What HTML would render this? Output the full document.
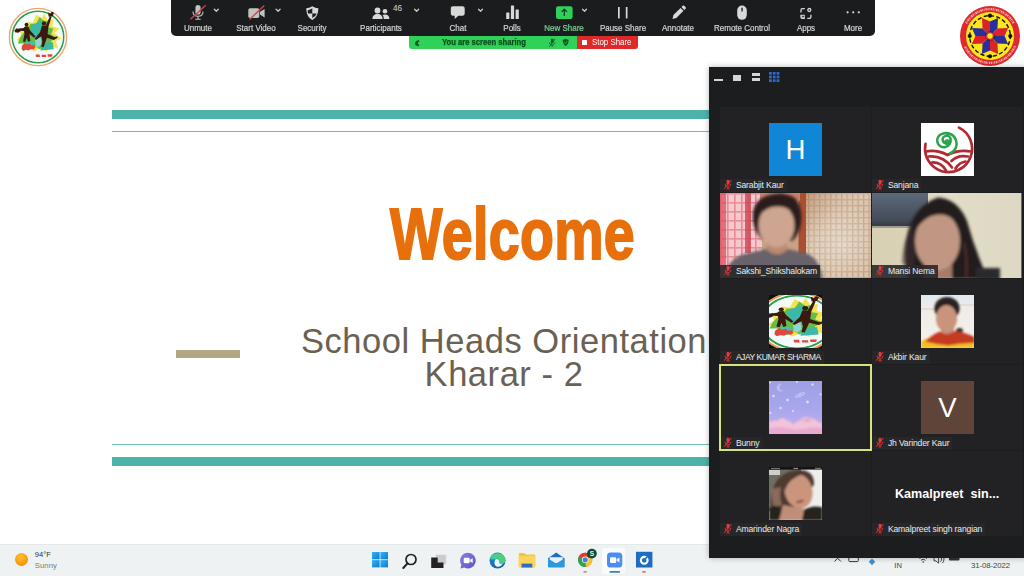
<!DOCTYPE html>
<html lang="en">
<head>
<meta charset="utf-8">
<title>Zoom Meeting - Screen Share</title>
<style>
*{box-sizing:border-box;margin:0;padding:0}
html,body{width:1024px;height:576px;overflow:hidden;background:#fff}
body{position:relative;font-family:"Liberation Sans","DejaVu Sans",sans-serif;color:#222}
.abs{position:absolute}
/* ---------- slide ---------- */
.teal{position:absolute;left:112px;width:700px;background:#4db3aa}
.welcome{position:absolute;left:389.500px;top:194px;font-weight:bold;font-size:71.800px;line-height:80px;color:#e8700c;-webkit-text-stroke:2px #e8700c;white-space:nowrap;transform-origin:0 0;transform:scaleX(.772);letter-spacing:.5px}
.sub{position:absolute;left:296px;top:324.5px;width:416px;text-align:center;font-size:34.5px;line-height:33px;color:#6a6153;white-space:nowrap;letter-spacing:.54px}
.tan{position:absolute;left:176px;top:349.5px;width:63.5px;height:8px;background:#b3a77f}
/* ---------- taskbar ---------- */
.taskbar{position:absolute;left:0;top:544px;width:1024px;height:32px;background:#eff2f2;border-top:1px solid #e6e9e9}
/* ---------- zoom toolbar ---------- */
.ztb{position:absolute;left:171px;top:0;width:704px;height:35.5px;background:#1b1c1e;border-radius:0 0 5px 5px}
.zl{position:absolute;top:21.800px;width:90px;margin-left:-45px;text-align:center;font-size:8.7px;line-height:12px;color:#d6d6d6;-webkit-text-stroke:.2px #d6d6d6;white-space:nowrap;transform:scaleX(.92)}
.zi{position:absolute;top:0}
.sharebar{position:absolute;left:409px;top:35.5px;width:168px;height:13px;background:#2fd158;border-radius:0 0 0 3px}
.stopbar{position:absolute;left:577px;top:35.5px;width:60.5px;height:13px;background:#e02828;border-radius:0 0 3px 0}
/* ---------- participants panel ---------- */
.panel{position:absolute;left:709px;top:67px;width:320px;height:491px;background:#1c1d1f;box-shadow:0 0 6px rgba(0,0,0,.28)}
.tile{position:absolute;width:150.200px;height:85.200px;background:#222224;overflow:hidden}
.c1{left:11.400px}.c2{left:163.400px;width:149.400px}
.r1{top:39.600px}.r2{top:125.600px}.r3{top:211.600px}.r4{top:297.600px}.r5{top:383.600px}
.av{position:absolute;left:48.500px;top:16.200px;width:53.200px;height:53.200px;overflow:hidden}
.c2 .av{left:48.400px}
.nm{position:absolute;left:0;bottom:0;height:13px;padding:0 3px 0 15.5px;font-size:8.6px;line-height:13.700px;color:#ececec;background:rgba(40,40,42,.9);white-space:nowrap;letter-spacing:-.15px}
.nm svg{position:absolute;left:3px;top:.7px}
</style>
</head>
<body>

<!-- ================= SLIDE ================= -->
<div class="teal" style="top:110px;height:8.5px"></div>
<div class="teal" style="top:131px;height:1px;background:#6dbfb7"></div>
<div class="teal" style="top:444px;height:1px;background:#6dbfb7"></div>
<div class="teal" style="top:457px;height:8.5px"></div>

<svg class="abs" style="left:8px;top:7.200px" width="60" height="60" viewBox="-30 -30 60 60">
<circle r="28.600" fill="#fff" stroke="#eaa56b" stroke-width="1.400"/>
<circle r="25.600" fill="none" stroke="#2f9c4b" stroke-width="1.800"/>
<circle r="24.900" fill="#f3fbfa"/>
<g transform="translate(.5 -.5) scale(1.150)"><path d="M-16-4l4-3 2-6 5 1 3-7 5 3 2-4 3 6 5-1-1 6 6 2-4 4 6 5-5 2 2 6-7-1-3 4-5-3-6 3-3-4-7 2 1-6-6-2 4-4z" fill="#f3e44f"/>
<path d="M-14-2l4-4 3-5 5 0 3-6 4 4 3-1 0 6 5 1-2 5 5 3-5 3 0 5-6-1-4 3-4-3-6 2-3-4-6 0 2-5z" fill="#62bd4b"/></g>
<path d="M-6-12.200L6-17 2.400-3.600-2.400 1.200-7.300-7.300z" fill="#3cb8a6"/>
<path d="M3.600 7.300L14.600 4.900 15.800 12.200 2.400 13.400z" fill="#3cb8a6"/>
<path d="M-12.200 4.900L-3.600 4.900-6 12.200-15.800 13.400z" fill="#43bfae"/>
<path d="M-3 2l2.500-3 3 1.500 1 6-3 4-3-2z" fill="#8fd8d0"/>
<g fill="#e4473a">
  <path d="M-16 8.500l3-2.500 2 1.500 3-1 1.500 2 3-.5 1 2.500-2 2-3-.5-2 1.500-3-1-2 1.500-2-2z"/>
  <path d="M-2.500 17.500h4l.5 2.500h-4zM3.500 17.800h4.500l.3 2.300h-4.500zM9.500 17.200h5l-.5 2.500h-4.200z"/>
</g>
<g fill="#3a1a10">
  <circle cx="-11.500" cy="-12.400" r="1.900"/>
  <path d="M-13-10.500l3.200-.3 1.800 4 5.500 6.300-1.500 1.300-4.500-3.800 .8 7-2.300.8-1.200-4-1.500 4.300-2.300-.6 1.500-7.500-.5-3-7.500-.300-.2-1.700 7.200-1z"/>
  <path d="M-23.500-6.800l2.300-2 1.700 1 1.800-1 .6 2.800-2.600 1.800-3.300-.5z"/>
  <circle cx="6" cy="-13.600" r="2.100"/>
  <path d="M4-11.500l3.800.2 4.200-9.700 1.600.8-3.200 10.200-.8 7 6.800 3.200 2.800-1 .5 1.500-3.800 2.300-7-2.300-1.500 4.500-1.800 5-2.300-.5 1-5.500-1-5-5.300 3.800-1.300-1.300 5.300-6.500z"/>
  <path d="M10-24.500l2.300 1 1.500-1.800 2.200.8-1.300 3.800-4 .5z"/>
</g>
</svg>
<svg class="abs" style="left:960.400px;top:6.400px" width="60" height="60" viewBox="-30 -30 60 60">
<circle r="30" fill="#dd2a2e"/>
<path d="M-23.75 -12.63A26.9 26.9 0 0 1 23.75 -12.63M24.94 10.08A26.9 26.9 0 0 1 -24.94 10.08" fill="none" stroke="#fbe3dc" stroke-width="2.300" stroke-dasharray="1.100 .8 .6 .7 1.500 .6" opacity=".72"/>
<circle r="24" fill="#fde71c"/>
<circle r="20.300" fill="none" stroke="#111" stroke-width="1.400" stroke-dasharray="4.200 2.200" stroke-dashoffset="-5.400"/>
<path d="M0 0L-7.42 -7.42 -8.05 -18.09 0 -14.6z" fill="#d8232a"/><path d="M0 0L0 -14.6 8.05 -18.09 7.42 -7.42z" fill="#2a2f9b"/><path d="M0 0L7.42 -7.42 18.09 -8.05 14.6 0z" fill="#d8232a"/><path d="M0 0L14.6 0 18.09 8.05 7.42 7.42z" fill="#2a2f9b"/><path d="M0 0L7.42 7.42 8.05 18.09 0 14.6z" fill="#d8232a"/><path d="M0 0L0 14.6 -8.05 18.09 -7.42 7.42z" fill="#2a2f9b"/><path d="M0 0L-7.42 7.42 -18.09 8.05 -14.6 0z" fill="#d8232a"/><path d="M0 0L-14.6 0 -18.09 -8.05 -7.42 -7.42z" fill="#2a2f9b"/>
<circle cx="0" cy="-20.3" r="2.100" fill="#111"/><circle cx="20.3" cy="0" r="2.100" fill="#111"/><circle cx="0" cy="20.3" r="2.100" fill="#111"/><circle cx="-20.3" cy="0" r="2.100" fill="#111"/>
<circle r="3.300" fill="#fde71c" stroke="#d8232a" stroke-width=".9"/>
<circle r="4.600" fill="none" stroke="#111" stroke-width=".7" stroke-dasharray=".8 1"/>
</svg>
<div class="welcome">Welcome</div>
<div class="tan"></div>
<div class="sub">School Heads Orientation<br>Kharar - 2</div>

<!-- ================= TASKBAR ================= -->
<div class="taskbar" id="taskbar">
  <!-- weather -->
  <div class="abs" style="left:14.900px;top:7.500px;width:13.600px;height:13.600px;border-radius:50%;background:radial-gradient(circle at 45% 35%,#ffc53a 0%,#fb9b0c 55%,#ee7d05 100%)"></div>
  <div class="abs" id="wt1" style="left:34.800px;top:5.400px;font-size:7.600px;line-height:9px;color:#333;white-space:nowrap">94°F</div>
  <div class="abs" id="wt2" style="left:34.800px;top:15.900px;font-size:7.800px;line-height:9px;color:#7b7b7b;white-space:nowrap">Sunny</div>
  <!-- start -->
  <svg class="abs" style="left:372.200px;top:7.300px" width="16" height="15.400" viewBox="0 0 16 15.400">
    <defs><linearGradient id="wing" x1="0" y1="0" x2="1" y2="1"><stop offset="0" stop-color="#35b6f2"/><stop offset="1" stop-color="#0a78d4"/></linearGradient></defs>
    <g fill="url(#wing)"><rect x="0" y="0" width="7.600" height="7.300"/><rect x="8.400" y="0" width="7.600" height="7.300"/><rect x="0" y="8.100" width="7.600" height="7.300"/><rect x="8.400" y="8.100" width="7.600" height="7.300"/></g>
  </svg>
  <!-- search -->
  <svg class="abs" style="left:400px;top:5px" width="20" height="20" viewBox="400 549 20 20">
    <circle cx="411" cy="558.500" r="5" fill="none" stroke="#222" stroke-width="1.700"/>
    <path d="M407.500 562.400L403.300 567" stroke="#222" stroke-width="2" stroke-linecap="round"/>
  </svg>
  <!-- task view -->
  <svg class="abs" style="left:430px;top:8px" width="18" height="16" viewBox="430 552 18 16">
    <rect x="435.500" y="553.400" width="10.800" height="10.200" rx="1" fill="#c9cbcc" stroke="#eceeee" stroke-width=".8"/>
    <path d="M431.200 556.500h6.500v5h5.800v5.400h-12.300z" fill="#222"/>
  </svg>
  <!-- teams chat -->
  <svg class="abs" style="left:458px;top:6px" width="20" height="20" viewBox="458 550 20 20">
    <defs><linearGradient id="tch" x1="0" y1="0" x2="1" y2="1"><stop offset="0" stop-color="#8b7fe0"/><stop offset="1" stop-color="#5b55c4"/></linearGradient></defs>
    <path d="M468 551.800a7.800 7.800 0 1 1-3.700 14.700l-3.900 1 1-3.700A7.800 7.800 0 0 1 468 551.800z" fill="url(#tch)"/>
    <rect x="463.700" y="556.800" width="6" height="5.400" rx="1.100" fill="#fff"/>
    <path d="M470.200 558.800l2.500-1.500v4.600l-2.500-1.500z" fill="#fff"/>
  </svg>
  <!-- edge -->
  <svg class="abs" style="left:488px;top:6px" width="20" height="20" viewBox="488 550 20 20">
    <defs><linearGradient id="edg" x1="0" y1="0" x2="1" y2="1"><stop offset="0" stop-color="#1b8fd8"/><stop offset=".6" stop-color="#1669b8"/><stop offset="1" stop-color="#0f4f96"/></linearGradient>
    <linearGradient id="edg2" x1="0" y1="1" x2="1" y2="0"><stop offset="0" stop-color="#2cc3d2"/><stop offset="1" stop-color="#5fd34e"/></linearGradient></defs>
    <circle cx="497.500" cy="559.600" r="8" fill="url(#edg)"/>
    <path d="M490 557.500a8 8 0 0 1 15.400 1.200c.3 2.700-1.700 4.300-3.900 4.300-1.600 0-2.500-.7-2.300-1.600.5-1.100 0-3.300-2.300-3.400-3-.1-5.300 1.500-6.900-.500z" fill="url(#edg2)"/>
    <path d="M495.500 558.200c2.300-.8 4.200.7 3.700 2.900-.3 1.500 1.500 2.300 3.500 1.700-1 2-3 3.300-5.300 3-2.800-.5-4-4.600-1.900-7.600z" fill="#eef6fb"/>
  </svg>
  <!-- folder -->
  <svg class="abs" style="left:517px;top:6.200px" width="20" height="18" viewBox="517 551 20 18">
    <path d="M518.800 554.200c0-.7.500-1.200 1.200-1.200h4.200l1.600 1.600h8.300c.7 0 1.200.5 1.200 1.200v10.500c0 .7-.5 1.200-1.200 1.200h-14.100c-.7 0-1.200-.5-1.200-1.200z" fill="#f7c23c"/>
    <path d="M518.800 556h16.500v10.300c0 .7-.5 1.200-1.200 1.200h-14.100c-.7 0-1.200-.5-1.200-1.200z" fill="#fbd55a"/>
    <rect x="521.500" y="563.600" width="10.800" height="3.900" fill="#2c6fbf"/>
  </svg>
  <!-- mail -->
  <svg class="abs" style="left:547px;top:6.200px" width="20" height="18" viewBox="547 551 20 18">
    <path d="M548 558.200l8.200-5.600 8.200 5.600v8.100c0 .6-.4 1-1 1h-14.400c-.6 0-1-.4-1-1z" fill="#1c6fc0"/>
    <path d="M549.600 557.200h13.200v6h-13.200z" fill="#eaf3fb"/>
    <path d="M548 558.600l8.200 5 8.200-5v7.700c0 .6-.4 1-1 1h-14.400c-.6 0-1-.4-1-1z" fill="#2c97e3"/>
  </svg>
  <!-- chrome -->
  <svg class="abs" style="left:576px;top:2.400px" width="24" height="26" viewBox="576 547 24 26">
    <circle cx="585.200" cy="559.800" r="7.100" fill="#e13c30"/>
    <path d="M585.200 559.800L579 556.300A7.100 7.100 0 0 0 585.900 566.900z" fill="#2ea44f"/>
    <path d="M585.200 559.800L585.900 566.900A7.100 7.100 0 0 0 591.400 556.300z" fill="#f5c327"/>
    <path d="M585.200 559.800L579 556.300A7.100 7.100 0 0 1 591.400 556.300z" fill="#e13c30"/>
    <circle cx="585.200" cy="559.800" r="3.300" fill="#fff"/>
    <circle cx="585.200" cy="559.800" r="2.600" fill="#3f82e6"/>
    <circle cx="591.900" cy="553.600" r="4.900" fill="#0f4a34"/>
    <text x="591.900" y="556.200" font-size="6.600" font-weight="bold" fill="#e8f2ec" text-anchor="middle" font-family="Liberation Sans, sans-serif">S</text>
    <rect x="583.400" y="571.300" width="3.400" height="1.200" rx=".6" fill="#a66a72"/>
  </svg>
  <!-- zoom (active) -->
  <div class="abs" style="left:602.300px;top:2.500px;width:23px;height:26px;border-radius:3px;background:#fafbfb"></div>
  <svg class="abs" style="left:604px;top:5.300px" width="22" height="24" viewBox="604 550 22 24">
    <rect x="607" y="552.600" width="15.300" height="14.900" rx="3.600" fill="#4a8df4"/>
    <rect x="610" y="557.200" width="6.200" height="5.700" rx="1.200" fill="#fff"/>
    <path d="M616.700 559.300l2.800-1.700v4.900l-2.800-1.700z" fill="#fff"/>
    <rect x="609.500" y="571" width="10.600" height="1.800" rx=".9" fill="#3b7fae"/>
  </svg>
  <!-- recorder app -->
  <svg class="abs" style="left:634px;top:4.300px" width="21" height="25" viewBox="634 549 21 25">
    <rect x="635.200" y="551" width="18" height="17.200" fill="#fbeaea"/>
    <rect x="636" y="551.800" width="16.400" height="15.700" fill="#1d6cc4"/>
    <circle cx="644.200" cy="560.300" r="3.400" fill="none" stroke="#fff" stroke-width="2.100"/>
    <circle cx="646.400" cy="557.800" r="1" fill="#1d6cc4"/>
    <rect x="642.200" y="571.300" width="3.600" height="1.300" rx=".6" fill="#d64545"/>
  </svg>
  <!-- tray (mostly hidden behind panel) -->
  <svg class="abs" style="left:830px;top:8.500px" width="140" height="14" viewBox="830 554 140 14">
    <path d="M834.500 561.500l3.200-3.300 3.200 3.300" fill="none" stroke="#333" stroke-width="1"/>
    <rect x="848.800" y="555" width="9.500" height="6.600" rx="1" fill="none" stroke="#333" stroke-width="1"/>
    <path d="M872 565.200l-3.200-3.400 3.200-3.400 3.200 3.400z" fill="#3f8fd8"/>
    <path d="M919.500 558.500a5.500 5.500 0 0 1 7.400 0M921 560.300a3.200 3.200 0 0 1 4.400 0" fill="none" stroke="#333" stroke-width="1"/><circle cx="923.200" cy="562" r=".8" fill="#333"/>
    <path d="M934 557h2l2.600-2.300v8.500l-2.600-2.300h-2zM940.400 556.200a3.800 3.800 0 0 1 0 5.600M942.300 554.800a6 6 0 0 1 0 8.400" fill="none" stroke="#333" stroke-width=".9"/>
    <rect x="949" y="554" width="10.500" height="6.500" rx="1" fill="#333"/>
  </svg>
  <div class="abs" id="trin" style="left:894.300px;top:16px;font-size:7.600px;line-height:9px;color:#444;white-space:nowrap">IN</div>
  <div class="abs" id="trdate" style="left:971px;top:15.600px;font-size:7.800px;line-height:9px;color:#444;white-space:nowrap;letter-spacing:-.1px">31-08-2022</div>
</div>

<!-- ================= ZOOM TOOLBAR ================= -->
<div class="ztb" id="ztb"></div>
<svg class="abs" style="left:171px;top:0" width="704" height="36" viewBox="171 0 704 36">
  <g fill="none" stroke="#c9c9c9" stroke-width="1.3" stroke-linecap="round" stroke-linejoin="round">
    <!-- chevrons -->
    <path d="M214.300 9.200l2 2 2-2"/>
    <path d="M276.100 9.200l2 2 2-2"/>
    <path d="M414.600 9.200l2 2 2-2"/>
    <path d="M478.500 9.200l2 2 2-2"/>
    <path d="M582.500 9.200l2 2 2-2"/>
  </g>
  <!-- mic -->
  <g>
    <rect x="195.400" y="5" width="5.200" height="9.500" rx="2.600" fill="#c2c2c2"/>
    <path d="M193 11.500c0 3 2.200 4.800 5 4.800s5-1.800 5-4.800" fill="none" stroke="#c2c2c2" stroke-width="1.100"/>
    <path d="M198 16.300v2.600M195.300 19.200h5.400" stroke="#c2c2c2" stroke-width="1.100" fill="none"/>
    <path d="M190.500 19.300L205.700 5.300" stroke="#d0424a" stroke-width="1.400"/>
  </g>
  <!-- camera -->
  <g>
    <rect x="248.300" y="8.300" width="11" height="9.800" rx="1.800" fill="#c2c2c2"/>
    <path d="M260 11.800l4.600-2.900v8.600l-4.600-2.900z" fill="#c2c2c2"/>
    <path d="M249.500 19.500L264.300 5.600" stroke="#d0424a" stroke-width="1.400"/>
  </g>
  <!-- shield -->
  <g>
    <path d="M312.300 6.200c2 1.300 4 1.900 6 2 0 5.600-1.800 9.400-6 11.700-4.200-2.300-6-6.100-6-11.700 2-.1 4-.7 6-2z" fill="#d9d9d9"/>
    <path d="M312.300 8.300v5.200h-4.300c-.2-1-.3-2.100-.3-3.300 1.600-.2 3.200-.8 4.600-1.900zM312.300 13.500h4.300c-.6 1.800-2 3.300-4.300 4.500z" fill="#1b1c1e"/>
  </g>
  <!-- participants -->
  <g fill="#d9d9d9">
    <circle cx="377.500" cy="10.500" r="2.900"/>
    <path d="M372.400 18.900c0-3.200 2.200-4.800 5.100-4.800s5.100 1.600 5.100 4.800z"/>
    <circle cx="385" cy="11.200" r="2.300"/>
    <path d="M383.800 18.900c0-1.800-.5-3-1.300-3.900.7-.4 1.600-.6 2.500-.6 2.500 0 4.400 1.400 4.400 4.500z"/>
  </g>
  <text x="397.500" y="11.400" font-size="8.200" fill="#d9d9d9" text-anchor="middle" font-family="Liberation Sans, sans-serif">46</text>
  <!-- chat -->
  <path d="M453 6.300h9.500c1.300 0 2.200.9 2.200 2.200v5c0 1.300-.9 2.200-2.200 2.200h-4.200l-3.600 3.300v-3.300h-1.700c-1.300 0-2.200-.9-2.200-2.200v-5c0-1.300.9-2.200 2.200-2.200z" fill="#d9d9d9"/>
  <!-- polls -->
  <g fill="#d9d9d9">
    <rect x="506.200" y="12.600" width="3.200" height="6.400" rx=".5"/>
    <rect x="510.900" y="5.600" width="3.200" height="13.400" rx=".5"/>
    <rect x="515.600" y="9.600" width="3.200" height="9.400" rx=".5"/>
  </g>
  <!-- new share -->
  <rect x="556" y="6.200" width="16.600" height="12.800" rx="2.200" fill="#2fd158"/>
  <path d="M564.300 16v-6.600M561.600 11.900l2.700-2.700 2.700 2.700" stroke="#14401f" stroke-width="1.300" fill="none"/>
  <!-- pause share -->
  <rect x="618" y="7" width="1.700" height="11.400" fill="#d9d9d9"/>
  <rect x="625.800" y="7" width="1.700" height="11.400" fill="#d9d9d9"/>
  <!-- annotate (pencil) -->
  <path d="M672.500 18.900l.9-3.800 7.200-7.200 2.900 2.900-7.200 7.200zM681.500 7l1.300-1.300c.4-.4 1-.4 1.400 0l1.500 1.500c.4.4.4 1 0 1.400l-1.300 1.300z" fill="#d9d9d9"/>
  <!-- remote control (mouse) -->
  <rect x="737.200" y="5.600" width="9.600" height="14.200" rx="4.800" fill="#d9d9d9"/>
  <rect x="741.400" y="7.600" width="1.300" height="4" rx=".6" fill="#1b1c1e"/>
  <!-- apps -->
  <g fill="none" stroke="#d9d9d9" stroke-width="1.300">
    <path d="M804.800 8.700h-2.400c-.9 0-1.400.5-1.400 1.400v2.400M807.300 18.400h2.200c.9 0 1.400-.5 1.400-1.400v-2.200M801 14.800v2.200c0 .9.500 1.400 1.400 1.400h2.400"/>
    <circle cx="809.300" cy="10" r="1.500"/>
    <rect x="801.700" y="15.300" width="2.600" height="2.600" stroke-width="1"/>
  </g>
  <!-- more -->
  <g fill="#d9d9d9"><circle cx="847.600" cy="12.300" r="1.100"/><circle cx="853.200" cy="12.300" r="1.100"/><circle cx="858.800" cy="12.300" r="1.100"/></g>
</svg>
<div class="zl" style="left:197.600px">Unmute</div>
<div class="zl" style="left:256.400px">Start Video</div>
<div class="zl" style="left:311.800px">Security</div>
<div class="zl" style="left:380.800px">Participants</div>
<div class="zl" style="left:457.900px">Chat</div>
<div class="zl" style="left:512.400px">Polls</div>
<div class="zl" style="left:563.700px;color:#2fd158">New Share</div>
<div class="zl" style="left:623.400px">Pause Share</div>
<div class="zl" style="left:677.600px">Annotate</div>
<div class="zl" style="left:741.500px">Remote Control</div>
<div class="zl" style="left:805.700px">Apps</div>
<div class="zl" style="left:853.200px">More</div>
<div class="sharebar" id="sharebar">
  <svg class="abs" style="left:0;top:0" width="168" height="13" viewBox="409 35.500 168 13">
    <path d="M415 43.200c0-1.800 1.600-3.300 3.800-3.600l.6 1.500c-1 .3-1.500.9-1.500 1.600 0 .8.600 1.300 1.400 1.300l-.3 1.600c-2.300.1-4-.9-4-2.400z" fill="#0f5a24"/>
    <rect x="550.900" y="38.200" width="2.600" height="4.600" rx="1.300" fill="#0f5a24"/>
    <path d="M549.600 41.800c0 1.700 1.100 2.700 2.600 2.700s2.600-1 2.600-2.700M552.200 44.500v1.700" stroke="#0f5a24" stroke-width=".9" fill="none"/>
    <path d="M549.300 46.200l5.800-7.800" stroke="#0f5a24" stroke-width=".9"/>
    <path d="M565.700 38.200c1 .7 2 1 3 1 0 3-.9 5-3 6.300-2.100-1.300-3-3.300-3-6.300 1 0 2-.3 3-1z" fill="#0f5a24"/>
    <path d="M564.400 41.900l1 1 1.700-1.900" stroke="#2fd158" stroke-width=".8" fill="none"/>
  </svg>
  <span class="abs" id="yass" style="left:33px;top:0;font-weight:bold;font-size:8.600px;line-height:13.400px;color:#0c4a1c;white-space:nowrap;transform-origin:0 50%;-webkit-text-stroke:.25px #0c4a1c;transform:scaleX(.888)">You are screen sharing</span>
</div>
<div class="stopbar" id="stopbar">
  <span class="abs" style="left:4.800px;top:4.200px;width:5px;height:5px;background:#fff;border-radius:.5px"></span>
  <span class="abs" id="stopt" style="left:14.600px;top:0;font-size:8.800px;line-height:13.200px;color:#fff;white-space:nowrap;transform-origin:0 50%;transform:scaleX(.895)">Stop Share</span>
</div>

<!-- ================= PARTICIPANTS PANEL ================= -->
<div class="panel" id="panel">
  <!-- view switcher -->
  <div class="abs" style="left:5px;top:12px;width:9px;height:2px;background:#d6d6d6"></div>
  <div class="abs" style="left:24px;top:8.300px;width:8.200px;height:5.700px;background:#d6d6d6"></div>
  <div class="abs" style="left:42.700px;top:5.800px;width:8.500px;height:3.300px;background:#d6d6d6"></div>
  <div class="abs" style="left:42.700px;top:10.700px;width:8.500px;height:3.300px;background:#d6d6d6"></div>
  <svg class="abs" style="left:60.300px;top:5px" width="10.400" height="10" viewBox="0 0 10.400 10"><g fill="#2a6bd0"><rect x="0" y="0" width="2.800" height="2.700"/><rect x="3.800" y="0" width="2.800" height="2.700"/><rect x="7.600" y="0" width="2.800" height="2.700"/><rect x="0" y="3.650" width="2.800" height="2.700"/><rect x="3.800" y="3.650" width="2.800" height="2.700"/><rect x="7.600" y="3.650" width="2.800" height="2.700"/><rect x="0" y="7.300" width="2.800" height="2.700"/><rect x="3.800" y="7.300" width="2.800" height="2.700"/><rect x="7.600" y="7.300" width="2.800" height="2.700"/></g></svg>

  <!-- row 1 -->
  <div class="tile c1 r1" id="t1">
    <div class="av" style="background:#0f86d6;color:#fff;text-align:center;font-size:27.600px;line-height:53.400px">H</div>
    <div class="nm"><svg width="10" height="11" viewBox="0 0 10 11"><rect x="3.600" y=".8" width="2.800" height="5.200" rx="1.400" fill="#e23b3b"/><path d="M2.200 4.800c0 1.900 1.200 3 2.800 3s2.800-1.100 2.800-3M5 7.800v1.800M3.400 9.800h3.200" stroke="#e23b3b" stroke-width=".9" fill="none"/><path d="M1.300 9.600L8.300 1" stroke="#e23b3b" stroke-width="1"/></svg>Sarabjit Kaur</div>
  </div>
  <div class="tile c2 r1" id="t2">
    <div class="av" id="av2" style="background:#fff"><svg width="53.500" height="53.500" viewBox="0 0 53.500 53.500" style="display:block">
<rect width="53.500" height="53.500" fill="#fff"/>
<g fill="none" stroke="#b02a33" stroke-width="2.700" stroke-linecap="round">
  <path d="M38 4.600A23.500 23.500 0 1 1 4.600 20.800"/>
  <path d="M5 28.500Q16 26.500 26.500 32 37.500 26.500 49.500 28.500"/>
  <path d="M7.500 33.500Q22 32 31 44.500"/>
  <path d="M11 39.500Q20 39 25 47.500"/>
  <path d="M30.500 38Q37 31.500 47 33.500"/>
  <path d="M34.500 45.500Q38 39.500 44.500 38.500"/>
</g>
<path transform="translate(1.800 1.600)" d="M22.800 17.300a1.600 1.600 0 1 1 1.500 1.700a4 4 0 1 1 3.500-4.500a6.800 6.800 0 1 1-8.500-5.200a10 10 0 0 1 8 19.500" fill="none" stroke="#2ba24c" stroke-width="2.500" stroke-linecap="round"/>
</svg></div>
    <div class="nm"><svg width="10" height="11" viewBox="0 0 10 11"><rect x="3.600" y=".8" width="2.800" height="5.200" rx="1.400" fill="#e23b3b"/><path d="M2.200 4.800c0 1.900 1.200 3 2.800 3s2.800-1.100 2.800-3M5 7.800v1.800M3.400 9.800h3.200" stroke="#e23b3b" stroke-width=".9" fill="none"/><path d="M1.300 9.600L8.300 1" stroke="#e23b3b" stroke-width="1"/></svg>Sanjana</div>
  </div>
  <!-- row 2 -->
  <div class="tile c1 r2" id="t3">
    <div id="vid1" class="abs" style="left:0;top:0;width:100%;height:100%"><svg width="150.2" height="85.2" viewBox="0 0 150.2 85.2" preserveAspectRatio="none" style="display:block">
<defs>
<filter id="bv1" x="-10%" y="-10%" width="120%" height="120%"><feGaussianBlur stdDeviation="1.500"/></filter>
<filter id="bv1s" x="-10%" y="-10%" width="120%" height="120%"><feGaussianBlur stdDeviation=".7"/></filter>
<pattern id="gridL" width="7" height="9" patternUnits="userSpaceOnUse"><rect width="7" height="9" fill="#f5c9ce"/><rect width="1.600" height="9" fill="#e68a94"/><rect width="7" height="1.600" fill="#e88f98"/></pattern>
<pattern id="gridR" width="5.500" height="6" patternUnits="userSpaceOnUse"><rect width="5.500" height="6" fill="#d3bda4"/><rect width="1.300" height="6" fill="#b98f6c"/><rect width="5.500" height="1.400" fill="#c19a78"/></pattern>
<radialGradient id="hlR" cx="122" cy="52" r="42" gradientUnits="userSpaceOnUse"><stop offset="0" stop-color="#fff" stop-opacity=".34"/><stop offset="1" stop-color="#fff" stop-opacity="0"/></radialGradient><linearGradient id="shadeR" x1="0" y1="0" x2="1" y2="1"><stop offset="0" stop-color="#a9764d" stop-opacity=".55"/><stop offset=".45" stop-color="#fff" stop-opacity=".18"/><stop offset="1" stop-color="#fff" stop-opacity=".05"/></linearGradient>
</defs>
<rect width="150.2" height="85.2" fill="#caa184"/>
<g filter="url(#bv1s)">
<rect x="-2" y="-2" width="44" height="90" fill="url(#gridL)"/>
<rect x="0" y="0" width="6" height="86" fill="#d9505d" opacity=".75"/>
<rect x="25" y="0" width="6" height="60" fill="#cc4450" opacity=".8"/>
<rect x="86" y="-2" width="68" height="90" fill="url(#gridR)"/>
<rect x="86" y="-2" width="68" height="90" fill="url(#shadeR)"/>
<rect x="78.500" y="0" width="7.500" height="62" fill="#aa5030"/><rect x="86" y="0" width="66" height="86" fill="url(#hlR)"/>
<rect x="40" y="0" width="40" height="8" fill="#c9826a"/>
</g>
<g filter="url(#bv1)">
  <path d="M33 28Q31 9 46 3 62-3 75 5 83 14 81 30 79 42 72 48L42 47Q35 40 33 28z" fill="#2c1e1b"/>
  <rect x="46" y="46" width="21" height="14" fill="#b98a74"/>
  <ellipse cx="56.500" cy="32.500" rx="18" ry="22" fill="#cda590"/>
  <path d="M38 24Q43 7 57 7 72 7 76 24 70 13 57 13.500 45 14 38 24z" fill="#2c1e1b"/>
  <path d="M4 86Q6 67 24 61L46 56Q57 64 68 56L88 61Q100 67 103 86z" fill="#67626a"/>
  <path d="M46 56Q57 67 68 56 57 61 46 56z" fill="#b78871"/>
</g>
</svg></div>
    <div class="nm"><svg width="10" height="11" viewBox="0 0 10 11"><rect x="3.600" y=".8" width="2.800" height="5.200" rx="1.400" fill="#e23b3b"/><path d="M2.200 4.800c0 1.900 1.200 3 2.800 3s2.800-1.100 2.800-3M5 7.800v1.800M3.400 9.800h3.200" stroke="#e23b3b" stroke-width=".9" fill="none"/><path d="M1.300 9.600L8.300 1" stroke="#e23b3b" stroke-width="1"/></svg>Sakshi_Shikshalokam</div>
  </div>
  <div class="tile c2 r2" id="t4">
    <div id="vid2" class="abs" style="left:0;top:0;width:100%;height:100%"><svg width="149.4" height="85.2" viewBox="0 0 149.4 85.2" preserveAspectRatio="none" style="display:block">
<defs>
<filter id="bv2" x="-10%" y="-10%" width="120%" height="120%"><feGaussianBlur stdDeviation="1.600"/></filter>
<linearGradient id="wall" x1="0" y1="0" x2="1" y2="0"><stop offset="0" stop-color="#d6d0b6"/><stop offset=".5" stop-color="#e2ddc6"/><stop offset="1" stop-color="#dcd8c4"/></linearGradient>
<linearGradient id="tv" x1="0" y1="0" x2="0" y2="1"><stop offset="0" stop-color="#5d6a7b"/><stop offset=".8" stop-color="#434b58"/><stop offset="1" stop-color="#33373f"/></linearGradient>
</defs>
<rect width="149.4" height="85.2" fill="url(#wall)"/>
<rect x="0" y="0" width="56" height="34" fill="url(#tv)"/>
<rect x="0" y="33" width="56" height="2" fill="#9c9d96"/><rect x="0" y="35" width="40" height="51" fill="#d8cfb0" opacity=".5"/>
<g filter="url(#bv2)">
  <path d="M36 86Q30 62 36 38 44 12 66 4.500 86 6 95 28 101 50 110 72 114 80 114 86z" fill="#231d1f"/><path d="M30 70Q30 50 40 30L44 60 40 80z" fill="#3a3032" opacity=".6"/>
  <rect x="104" y="75" width="24" height="12" fill="#2b2b2d"/>
  <path d="M52 86V70H80V86z" fill="#a67c68"/>
  <ellipse cx="65.500" cy="48" rx="22.500" ry="29.500" fill="#c19783"/>
  <path d="M42 40Q46 16 67 14 87 16 90 38 82 22 68 21.500 52 22 42 40z" fill="#231d1f"/>
  <path d="M92 50Q96 66 94 86" stroke="#c8584e" stroke-width=".6" fill="none" opacity=".8"/>
</g>
</svg></div>
    <div class="nm"><svg width="10" height="11" viewBox="0 0 10 11"><rect x="3.600" y=".8" width="2.800" height="5.200" rx="1.400" fill="#e23b3b"/><path d="M2.200 4.800c0 1.900 1.200 3 2.800 3s2.800-1.100 2.800-3M5 7.800v1.800M3.400 9.800h3.200" stroke="#e23b3b" stroke-width=".9" fill="none"/><path d="M1.300 9.600L8.300 1" stroke="#e23b3b" stroke-width="1"/></svg>Mansi Nema</div>
  </div>
  <!-- row 3 -->
  <div class="tile c1 r3" id="t5">
    <div class="av" id="av5" style="background:#0c0c0c"><svg width="53.500" height="53.500" viewBox="0 0 53.500 53.500" style="display:block">
<rect width="53.500" height="53.500" fill="#0d0d0d"/>
<g transform="translate(28 27) scale(1.370 1.020)">
<circle r="28.600" fill="#fff" stroke="#e8994f" stroke-width="1.800"/>
<circle r="25.600" fill="none" stroke="#2f9c4b" stroke-width="2"/>
<circle r="24.900" fill="#f3fbfa"/>
<g transform="translate(.5 -.5) scale(1.150)"><path d="M-16-4l4-3 2-6 5 1 3-7 5 3 2-4 3 6 5-1-1 6 6 2-4 4 6 5-5 2 2 6-7-1-3 4-5-3-6 3-3-4-7 2 1-6-6-2 4-4z" fill="#f3e44f"/>
<path d="M-14-2l4-4 3-5 5 0 3-6 4 4 3-1 0 6 5 1-2 5 5 3-5 3 0 5-6-1-4 3-4-3-6 2-3-4-6 0 2-5z" fill="#62bd4b"/></g>
<path d="M-6-12.200L6-17 2.400-3.600-2.400 1.200-7.300-7.300z" fill="#3cb8a6"/>
<path d="M3.600 7.300L14.600 4.900 15.800 12.200 2.400 13.400z" fill="#3cb8a6"/>
<path d="M-12.200 4.900L-3.600 4.900-6 12.200-15.800 13.400z" fill="#43bfae"/>
<path d="M-3 2l2.500-3 3 1.500 1 6-3 4-3-2z" fill="#8fd8d0"/>
<g fill="#e4473a">
  <path d="M-16 8.500l3-2.500 2 1.500 3-1 1.500 2 3-.5 1 2.500-2 2-3-.5-2 1.500-3-1-2 1.500-2-2z"/>
  <path d="M-2.500 17.500h4l.5 2.500h-4zM3.500 17.800h4.500l.3 2.300h-4.500zM9.500 17.200h5l-.5 2.500h-4.200z"/>
</g>
<g fill="#3a1a10">
  <circle cx="-11.500" cy="-12.400" r="1.900"/>
  <path d="M-13-10.500l3.200-.3 1.800 4 5.500 6.300-1.500 1.300-4.500-3.800 .8 7-2.300.8-1.200-4-1.500 4.300-2.300-.6 1.500-7.500-.5-3-7.500-.300-.2-1.700 7.200-1z"/>
  <path d="M-23.500-6.800l2.300-2 1.700 1 1.800-1 .6 2.800-2.600 1.800-3.300-.5z"/>
  <circle cx="6" cy="-13.600" r="2.100"/>
  <path d="M4-11.500l3.800.2 4.200-9.700 1.600.8-3.200 10.200-.8 7 6.800 3.200 2.800-1 .5 1.500-3.800 2.300-7-2.300-1.500 4.500-1.800 5-2.300-.5 1-5.500-1-5-5.300 3.800-1.300-1.300 5.300-6.500z"/>
  <path d="M10-24.500l2.300 1 1.500-1.800 2.200.8-1.300 3.800-4 .5z"/>
</g>
</g>
</svg></div>
    <div class="nm"><svg width="10" height="11" viewBox="0 0 10 11"><rect x="3.600" y=".8" width="2.800" height="5.200" rx="1.400" fill="#e23b3b"/><path d="M2.200 4.800c0 1.900 1.200 3 2.800 3s2.800-1.100 2.800-3M5 7.800v1.800M3.400 9.800h3.200" stroke="#e23b3b" stroke-width=".9" fill="none"/><path d="M1.300 9.600L8.300 1" stroke="#e23b3b" stroke-width="1"/></svg><span style="letter-spacing:-.5px">AJAY KUMAR SHARMA</span></div>
  </div>
  <div class="tile c2 r3" id="t6">
    <div class="av" id="av6" style="background:#eef1f3"><svg width="53.500" height="53.500" viewBox="0 0 53.500 53.500" style="display:block">
<defs><filter id="b1" x="-20%" y="-20%" width="140%" height="140%"><feGaussianBlur stdDeviation="1.100"/></filter>
<linearGradient id="akbg" x1="0" y1="0" x2="0" y2="1"><stop offset="0" stop-color="#dfeaf2"/><stop offset=".35" stop-color="#f1ece6"/><stop offset="1" stop-color="#f4f2ef"/></linearGradient></defs>
<rect width="53.500" height="53.500" fill="url(#akbg)"/>
<rect x="0" y="13" width="14" height="2" fill="#e5d6c8" opacity=".8"/><rect x="38" y="9" width="16" height="2" fill="#e5d8cc" opacity=".8"/>
<g filter="url(#b1)">
  <ellipse cx="26" cy="13.500" rx="12.600" ry="11.500" fill="#2b2421"/>
  <ellipse cx="38.500" cy="35.500" rx="3.500" ry="2.600" fill="#3a2f2c"/>
  <rect x="20" y="30" width="13" height="12" fill="#c08c74"/>
  <ellipse cx="25.500" cy="23.500" rx="10.500" ry="13.500" fill="#c9937b"/>
  <path d="M0 53.500V46Q8 43 14 40 26 44 38 39 46 41 53.500 44V53.500z" fill="#f2bf22"/>
  <path d="M4 46.500Q12 39 19 36.500 26.500 42 34 36 45 37.500 53.500 42V48Q40 47.500 27 50.500 14 49 4 46.500z" fill="#c53a24"/>
</g>
</svg></div>
    <div class="nm"><svg width="10" height="11" viewBox="0 0 10 11"><rect x="3.600" y=".8" width="2.800" height="5.200" rx="1.400" fill="#e23b3b"/><path d="M2.200 4.800c0 1.900 1.200 3 2.800 3s2.800-1.100 2.800-3M5 7.800v1.800M3.400 9.800h3.200" stroke="#e23b3b" stroke-width=".9" fill="none"/><path d="M1.300 9.600L8.300 1" stroke="#e23b3b" stroke-width="1"/></svg>Akbir Kaur</div>
  </div>
  <!-- row 4 -->
  <div class="tile c1 r4" id="t7">
    <div class="av" id="av7"><svg width="53.500" height="53.500" viewBox="0 0 53.500 53.500" style="display:block">
<defs><linearGradient id="bg7" x1="0" y1="0" x2="0" y2="1"><stop offset="0" stop-color="#a09fe3"/><stop offset=".45" stop-color="#a5a6ec"/><stop offset=".72" stop-color="#b4abee"/><stop offset="1" stop-color="#cfa6e2"/></linearGradient>
<filter id="b7" x="-20%" y="-20%" width="140%" height="140%"><feGaussianBlur stdDeviation="1.200"/></filter>
<filter id="b7s" x="-50%" y="-50%" width="200%" height="200%"><feGaussianBlur stdDeviation=".45"/></filter></defs>
<rect width="53.500" height="53.500" fill="url(#bg7)"/>
<g filter="url(#b7s)"><circle cx="4.5" cy="15" r="1.3" fill="#fff" opacity=".62"/><circle cx="18.5" cy="19" r="1.3" fill="#fff" opacity=".62"/><circle cx="38.5" cy="21" r="1.4" fill="#fff" opacity=".62"/><circle cx="11.5" cy="27" r="1.2" fill="#fff" opacity=".62"/><circle cx="24" cy="30" r="1.1" fill="#fff" opacity=".62"/><circle cx="1.5" cy="32" r="1.1" fill="#fff" opacity=".62"/><circle cx="43.5" cy="3.5" r="1.2" fill="#fff" opacity=".62"/><circle cx="28" cy="1" r="1.1" fill="#fff" opacity=".62"/><circle cx="51.5" cy="13.5" r="1.1" fill="#fff" opacity=".62"/><circle cx="1" cy="1.5" r="1" fill="#fff" opacity=".62"/>
<path d="M13.500 3a4 4 0 1 0 1 6.500a3.200 3.200 0 0 1-1-6.500z" fill="#d9d6f6" opacity=".5"/>
<ellipse cx="31" cy="14" rx="5" ry="1.300" transform="rotate(-22 31 14)" fill="none" stroke="#d9d6f6" stroke-width=".8" opacity=".9"/>
<circle cx="31" cy="14" r="1.800" fill="#c3bff0" opacity=".9"/></g>
<g filter="url(#b7)">
  <path d="M0 53.500V41Q4 38.500 8 40 12 35.500 17 38.500 21 40 24 43.500 27 40 31 39.500 35 34 41 37 46 37.500 50 41.500L53.500 42V53.500z" fill="#f3c3da"/>
  <path d="M0 53.500V47.500Q10 44.500 20 47.500 30 50 40 46.500 48 45.500 53.500 47.500V53.500z" fill="#eaa9cf"/>
  <path d="M33 40Q38 36 43 39 40 41.500 33 40z" fill="#dca6c6"/>
</g>
</svg></div>
    <div class="nm"><svg width="10" height="11" viewBox="0 0 10 11"><rect x="3.600" y=".8" width="2.800" height="5.200" rx="1.400" fill="#e23b3b"/><path d="M2.200 4.800c0 1.900 1.200 3 2.800 3s2.800-1.100 2.800-3M5 7.800v1.800M3.400 9.800h3.200" stroke="#e23b3b" stroke-width=".9" fill="none"/><path d="M1.300 9.600L8.300 1" stroke="#e23b3b" stroke-width="1"/></svg>Bunny</div>
  </div>
  <div class="abs" style="left:10.400px;top:296.900px;width:152.400px;height:87.400px;border:2.100px solid #d8e27e"></div>
  <div class="tile c2 r4" id="t8">
    <div class="av" style="background:#5f443a;color:#fff;text-align:center;font-size:27.600px;line-height:53.400px">V</div>
    <div class="nm"><svg width="10" height="11" viewBox="0 0 10 11"><rect x="3.600" y=".8" width="2.800" height="5.200" rx="1.400" fill="#e23b3b"/><path d="M2.200 4.800c0 1.900 1.200 3 2.800 3s2.800-1.100 2.800-3M5 7.800v1.800M3.400 9.800h3.200" stroke="#e23b3b" stroke-width=".9" fill="none"/><path d="M1.300 9.600L8.300 1" stroke="#e23b3b" stroke-width="1"/></svg>Jh Varinder Kaur</div>
  </div>
  <!-- row 5 -->
  <div class="tile c1 r5" id="t9">
    <div class="av" id="av9" style="background:#efeeed"><svg width="53.500" height="53.500" viewBox="0 0 53.500 53.500" style="display:block">
<defs><filter id="b9" x="-20%" y="-20%" width="140%" height="140%"><feGaussianBlur stdDeviation="1.300"/></filter></defs>
<rect width="53.500" height="53.500" fill="#f0eeec"/>
<rect x="0" y="2" width="32" height="42" fill="#6f6e64"/>
<rect x="0" y="3" width="11" height="5" fill="#cfcfca"/>
<g filter="url(#b9)">
  <path d="M2 42Q0 24 9 12 20 1 36 3.500 46 7 45 18L22 42 10 44z" fill="#4e3a30"/>
  <path d="M3 22Q2 32 5 40L13 38Q10 30 12 20z" fill="#8a6b5a"/>
  <path d="M0 53.500V41L7 38.500 14 44 12 53.500z" fill="#27221f"/>
  <path d="M10 53.500L14 38 36 42 37 53.500z" fill="#c08d77"/>
  <ellipse cx="29.500" cy="24" rx="13.800" ry="17.600" transform="rotate(-15 29.500 24)" fill="#c9957d"/>
  <path d="M14 14Q22 3 38 6 30 8 24 12 18 16 16 24z" fill="#4e3a30"/>
  <ellipse cx="31" cy="34.500" rx="4" ry="1.400" transform="rotate(-15 31 34.500)" fill="#a3443f"/>
  <path d="M33 53.500L35 43Q43 37.500 53.500 40.500V53.500z" fill="#28231f"/>
</g>
<rect x="0" y="0" width="53.500" height="2.600" fill="#131313"/>
<rect x="2" y=".9" width="9" height=".9" fill="#bbb" opacity=".7"/><rect x="24.500" y=".9" width="4.500" height=".9" fill="#ddd" opacity=".8"/><rect x="46" y=".8" width="6" height="1" fill="#bbb" opacity=".7"/>
</svg></div>
    <div class="nm"><svg width="10" height="11" viewBox="0 0 10 11"><rect x="3.600" y=".8" width="2.800" height="5.200" rx="1.400" fill="#e23b3b"/><path d="M2.200 4.800c0 1.900 1.200 3 2.800 3s2.800-1.100 2.800-3M5 7.800v1.800M3.400 9.800h3.200" stroke="#e23b3b" stroke-width=".9" fill="none"/><path d="M1.300 9.600L8.300 1" stroke="#e23b3b" stroke-width="1"/></svg>Amarinder Nagra</div>
  </div>
  <div class="tile c2 r5" id="t10">
    <div class="abs" id="kam" style="left:0;top:35px;width:100%;text-align:center;font-weight:bold;font-size:12.600px;line-height:16px;color:#fff;white-space:pre">Kamalpreet  sin...</div>
    <div class="nm"><svg width="10" height="11" viewBox="0 0 10 11"><rect x="3.600" y=".8" width="2.800" height="5.200" rx="1.400" fill="#e23b3b"/><path d="M2.200 4.800c0 1.900 1.200 3 2.800 3s2.800-1.100 2.800-3M5 7.800v1.800M3.400 9.800h3.200" stroke="#e23b3b" stroke-width=".9" fill="none"/><path d="M1.300 9.600L8.300 1" stroke="#e23b3b" stroke-width="1"/></svg>Kamalpreet singh rangian</div>
  </div>
</div>

</body>
</html>
